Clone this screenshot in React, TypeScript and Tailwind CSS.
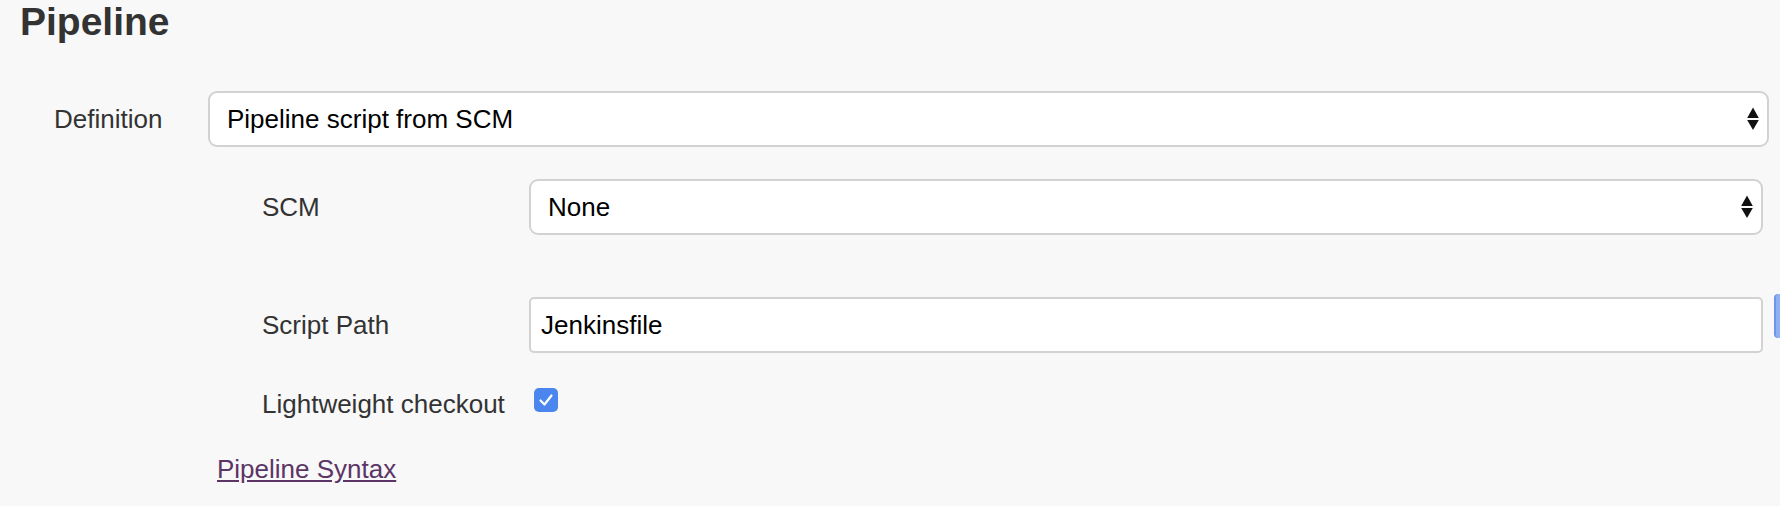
import React from "react";

function Arrows() {
  return (
    <svg width="12" height="24" viewBox="0 0 12 24" className="shrink-0">
      <path d="M6 0.5 L11.8 11 L0.2 11 Z" fill="#111" />
      <path d="M0.2 13 L11.8 13 L6 23 Z" fill="#111" />
    </svg>
  );
}

function SelectBox({ value }: { value: string }) {
  return (
    <div className="flex-1 h-[56px] bg-white border-2 border-[#d2d2d2] rounded-[9px] flex items-center justify-between pl-[17px] pr-[8px] text-[26px] leading-[30px] text-black">
      <span>{value}</span>
      <Arrows />
    </div>
  );
}

export default function App() {
  return (
    <div
      className="w-full h-[506px] bg-[#f8f8f8] text-[#333] overflow-hidden"
      style={{ fontFamily: '"Liberation Sans", Arial, sans-serif' }}
    >
      <h1 className="pl-[20px] text-[39px] leading-[44px] font-bold text-[#333]">Pipeline</h1>

      <div className="mt-[47px] flex items-center pl-[54px] pr-[11px]">
        <div className="w-[154px] text-[26px] leading-[30px]">Definition</div>
        <SelectBox value="Pipeline script from SCM" />
      </div>

      <div className="pl-[262px] pr-[17px]">
        <div className="mt-[32px] flex items-center">
          <div className="w-[267px] text-[26px] leading-[30px]">SCM</div>
          <SelectBox value="None" />
        </div>

        <div className="mt-[62px] flex items-center relative">
          <div className="w-[267px] text-[26px] leading-[30px]">Script Path</div>
          <div className="flex-1 h-[56px] bg-white border-2 border-[#d2d2d2] rounded-[5px] flex items-center pl-[10px] text-[26px] leading-[30px] text-black">
            Jenkinsfile
          </div>
          <div className="absolute right-[-17px] top-[-3px] w-[6px] h-[44px] rounded-l-[4px] bg-[#8fb0f2] border-l-2 border-[#6f95ea]" />
        </div>

        <div className="mt-[35px] flex items-start">
          <div className="w-[272px] mt-[1px] text-[26px] leading-[30px]">Lightweight checkout</div>
          <div className="w-[24px] h-[24px] rounded-[5px] bg-[#4a86ed] flex items-center justify-center">
            <svg width="16" height="14" viewBox="0 0 16 14">
              <path d="M2.5 7.5 L6.5 11.5 L13.5 2.5" stroke="#fff" strokeWidth="2.2" fill="none" strokeLinecap="round" strokeLinejoin="round" />
            </svg>
          </div>
        </div>
      </div>

      <div className="pl-[217px] mt-[35px]">
        <a href="#" className="text-[26px] leading-[30px] text-[#5c3566] underline">
          Pipeline Syntax
        </a>
      </div>
    </div>
  );
}
